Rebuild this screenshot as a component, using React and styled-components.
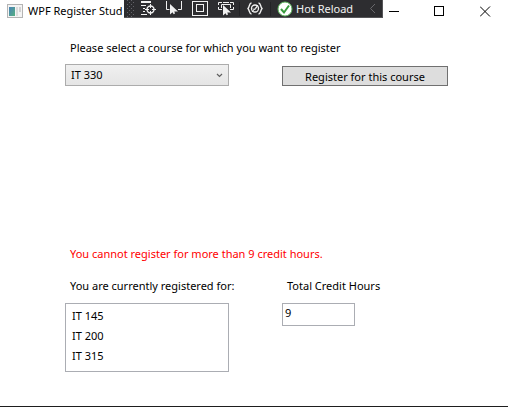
import React from "react";
import styled, { createGlobalStyle } from "styled-components";

const Global = createGlobalStyle`
  *, *::before, *::after { box-sizing: border-box; }
  body { margin: 0; background: #fff; }
  body, button, input, select { font-family: "Noto Sans", "Open Sans", sans-serif; font-size: 11px; line-height: 16px; color: #000; }
`;

const Window = styled.div`
  position: relative;
  display: flex;
  flex-direction: column;
  min-height: 100vh;
  border-bottom: 1px solid #1e1e1e;
`;

const TitleBar = styled.header`
  display: flex;
  align-items: center;
  height: 22px;
  padding-left: 7px;
`;

const Title = styled.h1`
  flex: 1;
  margin: 0 0 0 5px;
  font-size: 11px;
  font-weight: 400;
  white-space: nowrap;
`;

const CaptionButton = styled.button`
  display: flex;
  align-items: center;
  justify-content: center;
  width: 46px;
  height: 22px;
  padding: 0;
  border: 0;
  background: transparent;
`;

const DebugBar = styled.div`
  position: absolute;
  top: 0;
  left: 124px;
  display: flex;
  align-items: center;
  width: 259px;
  height: 18px;
  border: solid #555558;
  border-width: 0 1px 1px 0;
  background: #2d2d30;
`;

const Grip = styled.span`
  width: 8px;
  height: 17px;
  margin-left: 3px;
  background:
    conic-gradient(from 270deg at 1px 1px, #64646a 90deg, transparent 0) 0 0 / 4px 4px,
    conic-gradient(from 270deg at 1px 1px, #64646a 90deg, transparent 0) 2px 2px / 4px 4px;
`;

const ToolButton = styled.button`
  display: flex;
  align-items: center;
  justify-content: center;
  width: ${(p) => p.$width || 26}px;
  height: 17px;
  padding: 0;
  border: 0;
  background: transparent;
`;

const Divider = styled.span`
  width: 1px;
  height: 14px;
  background: #222225;
`;

const HotReload = styled.button`
  display: flex;
  flex: 1;
  align-items: center;
  gap: 3px;
  height: 17px;
  padding: 0 0 0 6px;
  border: 0;
  background: transparent;
  color: #f1f1f1;
  white-space: nowrap;
`;

const Form = styled.form`
  display: flex;
  flex-direction: column;
  padding: 18px 60px 34px 65px;
`;

const Columns = styled.div`
  display: grid;
  grid-template-columns: minmax(0, 164fr) minmax(0, 166fr);
  column-gap: 53px;
  align-items: ${(p) => p.$align || "start"};
`;

const Label = styled.label`
  display: block;
  padding-left: 5px;
  margin-bottom: ${(p) => p.$gap || 8}px;
  white-space: nowrap;
`;

const ComboBox = styled.span`
  display: grid;
  align-items: center;
  svg { grid-area: 1 / 1; justify-self: end; margin-right: 6px; pointer-events: none; }
`;

const Select = styled.select`
  grid-area: 1 / 1;
  width: 100%;
  height: 22px;
  padding: 0 5px;
  border: 1px solid #acacac;
  border-radius: 0;
  appearance: none;
  background: linear-gradient(#f0f0f0, #e5e5e5);
`;

const RegisterButton = styled.button`
  height: 20px;
  padding: 2px 0 0;
  border: 1px solid #707070;
  background: #ddd;
`;

const Message = styled.p`
  margin: 160px 0 16px;
  padding-left: 5px;
  color: #f00;
`;

const CourseList = styled.ul`
  height: 69px;
  margin: 0;
  padding: 2px 6px;
  border: 1px solid #abadb3;
  list-style: none;
`;

const Course = styled.li`
  line-height: 20px;
`;

const TextBox = styled.input`
  width: 73px;
  height: 23px;
  padding: 0 2px 4px;
  border: 1px solid #abadb3;
  border-radius: 0;
`;

const Icon = ({ w = 16, h = 16, children }) => (
  <svg width={w} height={h} viewBox={`0 0 ${w} ${h}`} fill="none" stroke="#f1f1f1" aria-hidden="true">
    {children}
  </svg>
);

const Cursor = ({ x, y }) => (
  <path transform={`translate(${x} ${y})`} d="M0 0v10.5l2.5-2.3 1.2 2 1.3-.8-.7-2H8z" fill="#f1f1f1" stroke="none" />
);

export default function App() {
  return (
    <>
      <Global />
      <Window>
        <TitleBar>
          <svg width="16" height="14" viewBox="0 0 16 14" aria-hidden="true">
            <defs>
              <linearGradient id="pane" x1="0" y1="0" x2="1" y2="1">
                <stop offset="0" stopColor="#4a82b8" />
                <stop offset="1" stopColor="#55b080" />
              </linearGradient>
            </defs>
            <rect x=".5" y=".5" width="15" height="13" fill="#f4f4f4" stroke="#b4b4b4" />
            <rect x="2" y="3" width="6" height="9" fill="url(#pane)" />
            <rect x="9" y="3" width="2" height="9" fill="#dcdcdc" />
            <rect x="12" y="3" width="2" height="5" fill="#d2d2d2" />
          </svg>
          <Title>WPF Register Stud</Title>
          <CaptionButton type="button" aria-label="Minimize">
            <Icon w={11} h={11}><path d="M1 5.5h10" stroke="#000" /></Icon>
          </CaptionButton>
          <CaptionButton type="button" aria-label="Maximize">
            <Icon w={11} h={11}><rect x=".5" y=".5" width="9" height="9" stroke="#000" /></Icon>
          </CaptionButton>
          <CaptionButton type="button" aria-label="Close">
            <Icon w={11} h={11}><path d="M0 .5l10 10M10 .5l-10 10" stroke="#000" /></Icon>
          </CaptionButton>
        </TitleBar>

        <DebugBar role="toolbar" aria-label="Debug tools">
          <Grip />
          <ToolButton type="button" aria-label="Go to live visual tree">
            <Icon>
              <path d="M1 1h10" strokeWidth="2" />
              <path d="M1 4.5h5M3 7.5h2M3 10.5h2M1 13.5h6" />
              <circle cx="10.5" cy="8.5" r="3.5" strokeWidth="1.4" />
              <path d="M10.5 3v4M10.5 10v4M5 8.5h4M12 8.5h4" />
            </Icon>
          </ToolButton>
          <ToolButton type="button" aria-label="Select element">
            <Icon><path d="M.5 0v8.5h3M12 8.5h3.5V0" /><Cursor x={4} y={3} /></Icon>
          </ToolButton>
          <ToolButton type="button" aria-label="Display layout adorners">
            <Icon><rect x=".5" y=".5" width="15" height="14" /><rect x="4.5" y="3.5" width="7" height="7" /></Icon>
          </ToolButton>
          <ToolButton type="button" aria-label="Track focused element">
            <Icon><path d="M.5 4V1.5H4M12 1.5h3.5V4M.5 6v2.5H4M12 8.5h3.5V6M3.5 7V3.5h9V7M5 1.5h6" /><Cursor x={5} y={4} /></Icon>
          </ToolButton>
          <Divider />
          <ToolButton type="button" aria-label="Binding failures" $width={30}>
            <Icon>
              <path d="M4.5 2C2 2 3 5 1 7.5 3 10 2 13 4.5 13M11.5 2c2.5 0 1.5 3 3.5 5.5C13 10 14 13 11.5 13" strokeWidth="1.4" />
              <circle cx="8" cy="7.5" r="3.5" strokeWidth="1.3" />
              <path d="M6 7.5l1.5 1.5L10 6M5 11l6-7" />
            </Icon>
          </ToolButton>
          <Divider />
          <HotReload type="button">
            <Icon>
              <circle cx="8" cy="8" r="7" fill="#fff" stroke="#5bb55b" />
              <path d="M4 8l3 3.5L12 4.5" stroke="#379b3c" strokeWidth="2" />
            </Icon>
            Hot Reload
          </HotReload>
          <ToolButton type="button" aria-label="Collapse toolbar" $width={18}>
            <Icon w={8} h={12}><path d="M6 1L1.5 5.5 6 10" stroke="#68686c" /></Icon>
          </ToolButton>
        </DebugBar>

        <Form onSubmit={(e) => e.preventDefault()}>
          <Label htmlFor="course">Please select a course for which you want to register</Label>
          <Columns $align="end">
            <ComboBox>
              <Select id="course" defaultValue="IT 330">
                <option>IT 330</option>
              </Select>
              <Icon w={7} h={5}><path d="M1 1l2.500 2.500L6 1" stroke="#606060" strokeWidth="1.2" /></Icon>
            </ComboBox>
            <RegisterButton type="submit">Register for this course</RegisterButton>
          </Columns>
          <Message role="alert">You cannot register for more than 9 credit hours.</Message>
          <Columns>
            <div>
              <Label as="div" id="registered" $gap={9}>You are currently registered for:</Label>
              <CourseList aria-labelledby="registered">
                <Course>IT 145</Course>
                <Course>IT 200</Course>
                <Course>IT 315</Course>
              </CourseList>
            </div>
            <div>
              <Label htmlFor="hours" $gap={9}>Total Credit Hours</Label>
              <TextBox id="hours" defaultValue="9" />
            </div>
          </Columns>
        </Form>
      </Window>
    </>
  );
}
